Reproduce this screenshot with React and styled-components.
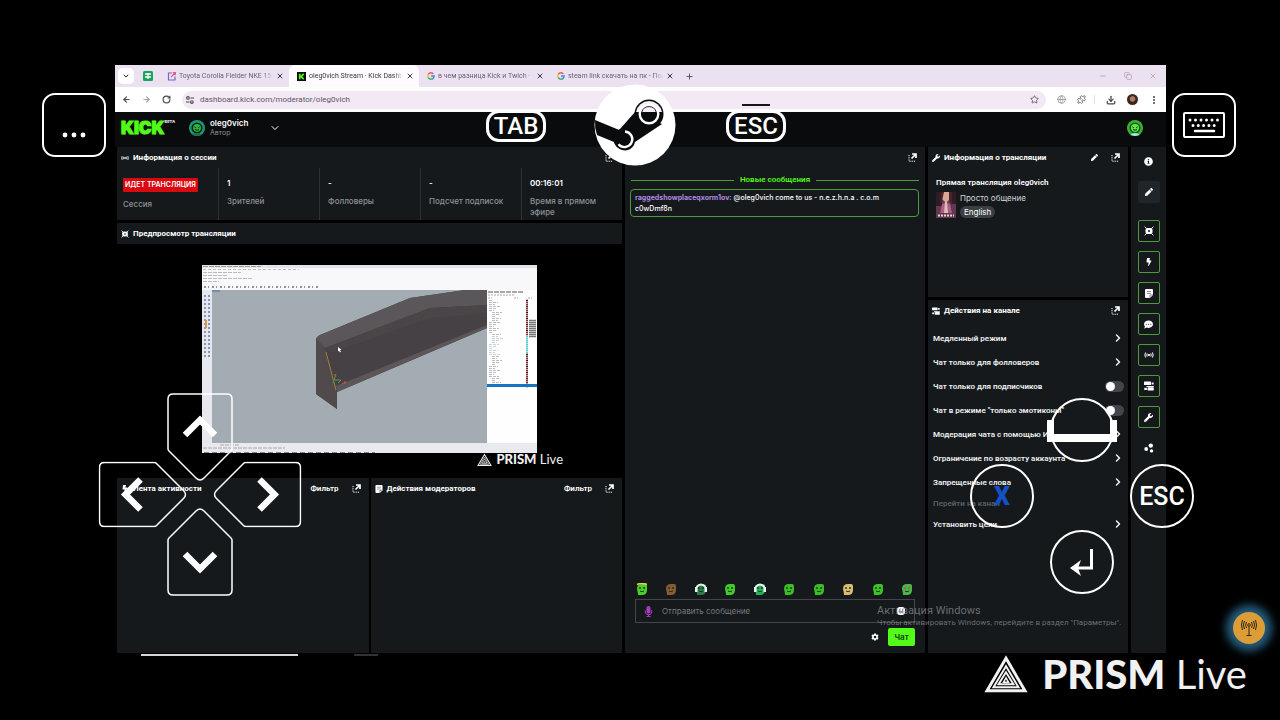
import React from "react";
import styled, { createGlobalStyle, css } from "styled-components";
import {
  ArrowLeft,
  ArrowRight,
  ChevronDown,
  ChevronRight,
  Copy,
  Download,
  EllipsisVertical,
  Globe,
  Minus,
  Plus,
  Puzzle,
  RotateCw,
  Star,
  X,
} from "lucide-react";
import {
  FaBolt,
  FaCommentDots,
  FaInfoCircle,
  FaMicrophone,
  FaPen,
  FaWrench,
} from "react-icons/fa";
import { IoSettingsSharp } from "react-icons/io5";

const GlobalStyle = createGlobalStyle`
  * {
    box-sizing: border-box;
  }
  body {
    margin: 0;
    background: #000;
    color: #fff;
    font-family: Inter, "Noto Sans", sans-serif;
    font-size: 8px;
  }
  button,
  input {
    margin: 0;
    padding: 0;
    border: 0;
    background: none;
    color: inherit;
    font: inherit;
  }
  svg {
    display: block;
    flex: none;
  }
`;

const colors = {
  panel: "#15191c",
  green: "#53fc18",
  outline: "#4f9a3c",
  muted: "#8d9296",
};

// Page
const Screen = styled.main`
  position: relative;
  display: flex;
  flex-direction: column;
  min-height: 100vh;
  padding: 65px 114px 64px 115px;
  overflow: hidden;
`;

const Desktop = styled.div`
  position: relative;
  flex: 1;
  display: flex;
  flex-direction: column;
  background: #000;
`;

// Browser chrome
const TabStrip = styled.div`
  display: flex;
  align-items: center;
  height: 22px;
  padding: 0 9px 0 3px;
  background: #ebe1f1;
  color: #6b6371;
  font-family: Roboto, sans-serif;
  font-size: 7px;
`;

const TabMenu = styled.button`
  display: grid;
  place-items: center;
  width: 16px;
  height: 16px;
  margin-right: 9px;
  border-radius: 5px;
  background: #fff;
  color: #222;
`;

const Tabs = styled.div`
  display: flex;
  margin: 0 6px;
`;

const Tab = styled.div`
  display: flex;
  align-items: center;
  gap: 3px;
  width: 130px;
  height: 22px;
  padding: 0 5px 0 8px;
  ${({ $active }) =>
    $active &&
    css`
      border-radius: 6px 6px 0 0;
      background: #fdfbfe;
      color: #3b363f;
    `}
`;

const TabTitle = styled.button`
  flex: 1;
  overflow: hidden;
  white-space: nowrap;
  text-align: left;
  mask-image: linear-gradient(to right, #000 90%, transparent);
`;

const IconButton = styled.button`
  display: grid;
  place-items: center;
  color: ${({ $color }) => $color || "inherit"};
`;

const WindowButtons = styled.div`
  display: flex;
  gap: 17px;
  margin-left: auto;
  color: #a795a8;
`;

const AddressBar = styled.div`
  display: flex;
  align-items: center;
  gap: 11px;
  height: 25px;
  padding: 0 7px;
  background: #fff;
  color: #4b4650;
`;

const Omnibox = styled.label`
  flex: 1;
  display: flex;
  align-items: center;
  gap: 6px;
  height: 18px;
  padding: 0 7px 0 4px;
  border-radius: 9px;
  background: #f2e9f5;

  input {
    flex: 1;
    outline: none;
    color: #5d5663;
    font-family: Roboto, sans-serif;
    font-size: 8px;
  }
`;

const Extensions = styled.div`
  display: flex;
  gap: 11px;
  padding-right: 8px;
  border-right: 1px solid #e6dcea;
`;

const UserPhoto = styled.span`
  width: 11px;
  height: 11px;
  border-radius: 50%;
  background: radial-gradient(circle at 50% 45%, #b07a62 28%, #3a2522 40%);
`;

// Dashboard
const Header = styled.header`
  display: flex;
  align-items: center;
  height: 35px;
  padding: 0 23px 4px 6px;
  background: #090b0c;
`;

const Logo = styled.a`
  display: flex;
  align-items: flex-start;
  width: 68px;
  color: ${colors.green};
  font-size: 17px;
  font-weight: 900;
  line-height: 20px;
  text-decoration: none;
  -webkit-text-stroke: 1px ${colors.green};

  sup {
    color: #ddd;
    font-size: 4px;
    line-height: 8px;
    -webkit-text-stroke: 0;
  }
`;

const Account = styled.button`
  display: flex;
  align-items: center;
  gap: 5px;
  margin-right: auto;
  text-align: left;
  line-height: 10px;

  strong,
  span {
    display: block;
  }
  strong {
    font-weight: 600;
  }
  span {
    color: ${colors.muted};
    font-size: 7px;
  }
  svg:last-child {
    margin-left: 16px;
  }
`;

const Layout = styled.div`
  flex: 1;
  display: grid;
  grid-template-columns: 505fr 300fr 200fr 35px;
  gap: 3px;
  padding: 0 0 0 2px;
`;

const Column = styled.div`
  display: flex;
  flex-direction: column;
  gap: 3px;
  min-width: 0;
`;

const Panel = styled.section`
  display: flex;
  flex-direction: column;
  min-width: 0;
  height: ${({ $height }) => $height || "auto"};
  flex: ${({ $grow }) => ($grow ? 1 : "none")};
  background: ${colors.panel};
`;

const PanelHead = styled.div`
  display: flex;
  align-items: center;
  gap: 13px;
  height: 21px;
  padding: 0 8px 0 4px;
`;

const PanelTitle = styled.h2`
  display: flex;
  align-items: center;
  gap: 4px;
  margin: 0 auto 0 0;
  font-family: Roboto, sans-serif;
  font-size: 8px;
  font-weight: 700;
  white-space: nowrap;

  svg {
    width: 8px;
    height: 8px;
  }
`;

const Filter = styled.button`
  font-family: Roboto, sans-serif;
  font-weight: 600;
`;

const Stats = styled.dl`
  flex: 1;
  display: grid;
  grid-template-columns: repeat(5, 1fr);
  margin: 0;
`;

const Stat = styled.div`
  display: flex;
  flex-direction: column;
  gap: 7px;
  padding: 10px 8px 0;
  line-height: 11px;
  font-weight: 500;

  & + & {
    border-left: 1px solid #2c3135;
  }
  &:first-child {
    padding-left: 6px;
  }
  dt {
    order: 2;
    color: ${colors.muted};
  }
  dd {
    margin: 0;
    font-weight: 600;
  }
`;

const LiveBadge = styled.span`
  display: inline-block;
  padding: 1px 2px;
  border-radius: 1px;
  background: #d8090f;
  font-size: 7px;
  font-weight: 600;
  line-height: 12px;
  white-space: nowrap;
`;

const Preview = styled.div`
  display: flex;
  justify-content: center;
  height: 231px;
  padding-top: 21px;
  background: #000;
`;

const VideoFrame = styled.div`
  width: 335px;
`;

const PrismMark = styled.div`
  display: flex;
  align-items: center;
  justify-content: flex-end;
  gap: ${({ $large }) => ($large ? "14px" : "4px")};
  color: #f1f1f1;
  font-family: Lato, sans-serif;
  font-size: ${({ $large }) => ($large ? "40px" : "13px")};
  line-height: 1;
  white-space: nowrap;

  b {
    font-weight: 900;
  }

  ${({ $large }) =>
    $large
      ? css`
          position: absolute;
          right: 33px;
          bottom: 26px;
        `
      : css`
          margin-right: -26px;
        `}
`;

const Pair = styled.div`
  flex: 1;
  display: grid;
  grid-template-columns: 1fr 1fr;
  gap: 2px;
`;

// Chat
const NewMessages = styled.div`
  display: flex;
  align-items: center;
  gap: 6px;
  margin: 7px 6px 4px;
  color: ${colors.green};
  font-family: Roboto, sans-serif;
  font-weight: 600;
  line-height: 10px;

  &::before,
  &::after {
    content: "";
    flex: 1;
    height: 1px;
    background: ${colors.outline};
  }
`;

const Message = styled.p`
  margin: 0 6px 0 5px;
  padding: 2px 4px;
  border: 1px solid ${colors.outline};
  border-radius: 4px;
  font-size: 7px;
  font-weight: 500;
  line-height: 11px;

  b {
    color: #b08be0;
    font-weight: 700;
  }
`;

const Emotes = styled.div`
  display: flex;
  justify-content: space-between;
  margin: auto 12px 4px 11px;
`;

const ChatForm = styled.form`
  display: flex;
  flex-direction: column;
  gap: 5px;
  padding: 0 10px 7px;
`;

const ChatField = styled.label`
  display: flex;
  align-items: center;
  gap: 8px;
  height: 24px;
  padding: 0 9px 0 7px;
  border: 1px solid #42464a;

  input {
    flex: 1;
    min-width: 0;
    outline: none;
    font-size: 8px;
  }
  input::placeholder {
    color: #74797e;
  }
`;

const ChatActions = styled.div`
  display: flex;
  justify-content: flex-end;
  align-items: center;
  gap: 9px;
`;

const SendButton = styled.button`
  width: 27px;
  height: 18px;
  border-radius: 2px;
  background: ${colors.green};
  color: #143808;
  font-weight: 600;
`;

// Stream info and channel actions
const StreamInfo = styled.div`
  padding: 9px 8px;
  font-family: Roboto, sans-serif;
  font-weight: 600;
  line-height: 12px;
`;

const Category = styled.div`
  display: flex;
  gap: 4px;
  margin-top: 3px;
  font-family: Inter, sans-serif;
  font-weight: 400;
  color: #d4d7d9;
`;

const Tag = styled.span`
  display: block;
  width: max-content;
  margin-top: 2px;
  padding: 0 4px;
  border-radius: 6px;
  background: #3b4044;
  color: #fff;
`;

const ActionList = styled.div`
  padding: 5px 4px 0 5px;
`;

const Action = styled.button`
  display: flex;
  align-items: center;
  justify-content: space-between;
  width: 100%;
  height: ${({ $muted }) => ($muted ? "18px" : "24px")};
  color: ${({ $muted }) => ($muted ? "#5a5f63" : "#f0f1f1")};
  font-family: Roboto, sans-serif;
  font-weight: 600;
  white-space: nowrap;
`;

const Switch = styled.input`
  appearance: none;
  display: flex;
  align-items: center;
  width: 19px;
  height: 11px;
  border-radius: 6px;
  background: #42464a;

  &::before {
    content: "";
    width: 9px;
    height: 9px;
    margin: 1px;
    border-radius: 50%;
    background: #fff;
  }
`;

const Rail = styled.nav`
  display: flex;
  flex-direction: column;
  align-items: center;
  gap: 9px;
  padding-top: 3px;
  background: ${colors.panel};
`;

const RailButton = styled.button`
  display: grid;
  place-items: center;
  width: 22px;
  height: 22px;
  border: 1px solid ${({ $on }) => ($on ? colors.outline : "transparent")};
  border-radius: 2px;
  background: ${({ $filled }) => ($filled ? "#20252a" : "none")};

  &:nth-child(3) {
    margin-top: 8px;
  }
`;

const Footer = styled.div`
  display: flex;
  gap: 56px;
  height: 3px;
  padding: 1px 0 0 26px;
  background: #000;

  span {
    width: 157px;
    background: #d5d5d5;
  }
  span + span {
    width: 24px;
    background: #333;
  }
`;

const Activation = styled.div`
  position: absolute;
  right: 40px;
  bottom: 28px;
  width: 249px;
  color: rgba(160, 164, 168, 0.62);
  font-family: Roboto, sans-serif;
  font-size: 8px;
  line-height: 10px;
  white-space: nowrap;

  b {
    display: block;
    font-size: 11px;
    font-weight: 400;
    line-height: 15px;
  }
`;

// Touch controls floating over the stream
const Control = styled.button`
  position: absolute;
  top: ${({ $top }) => $top}px;
  left: ${({ $left }) => $left};
  right: ${({ $right }) => $right};
`;

const SquareControl = styled(Control)`
  display: grid;
  place-items: center;
  width: 64px;
  height: 64px;
  border: 2px solid #fff;
  border-radius: 13px;
  background: #000;
`;

const PillControl = styled(Control)`
  width: 60px;
  height: 32px;
  border: 3px solid #fff;
  border-radius: 13px;
  background: #0a0b0c;
  font: 500 24px/26px Roboto, sans-serif;

  ${({ $handle }) =>
    $handle &&
    css`
      &::before {
        content: "";
        position: absolute;
        top: -9px;
        left: 13px;
        right: 13px;
        height: 2px;
        background: #161418;
      }
    `}
`;

const RoundControl = styled(Control)`
  display: grid;
  place-items: center;
  width: 64px;
  height: 64px;
  border: 2px solid #fff;
  border-radius: 50%;
  color: ${({ $color }) => $color || "#fff"};
  font: ${({ $bold }) => ($bold ? 900 : 500)} 25px Roboto, sans-serif;
`;

const BareControl = styled(Control)`
  display: block;
`;

const DPad = styled.div`
  position: absolute;
  top: 393px;
  left: 98px;
  display: grid;
  place-items: center;
  width: 203px;
  height: 203px;
`;

const DPadButton = styled.button`
  grid-area: 1 / 1;
  display: flex;
  align-items: flex-start;
  justify-content: center;
  height: 203px;
  transform: rotate(${({ $turn }) => $turn}deg);
  pointer-events: none;

  svg {
    pointer-events: auto;
  }
`;

const Beacon = styled(Control)`
  display: grid;
  place-items: center;
  width: 32px;
  height: 32px;
  border-radius: 50%;
  background: #dc9d38;
  color: #35260c;
  box-shadow: 0 0 8px 7px #255d7e;
`;

// Icons
const PopOut = () => (
  <svg width="9" height="9" viewBox="0 0 9 9" fill="none" stroke="#fff">
    <path d="M4 1h4v4M8 1L3.5 5.5" strokeWidth="1.7" />
    <path d="M1 2v6.2h7" strokeDasharray="1.2 1" />
  </svg>
);

const Signal = () => (
  <svg width="10" height="10" viewBox="0 0 10 10" fill="none" stroke="currentColor">
    <path d="M1.5 2.5q-1.2 2.5 0 5M3.2 3.4q-.8 1.6 0 3.2M8.5 2.5q1.2 2.5 0 5M6.8 3.4q.8 1.6 0 3.2" />
    <circle cx="5" cy="5" r=".7" fill="currentColor" />
  </svg>
);

const PreviewIcon = () => (
  <svg width="10" height="10" viewBox="0 0 10 10" fill="none" stroke="currentColor">
    <path d="M.7.7l1.8 1.8M9.3.7L7.5 2.5M9.3 9.3L7.5 7.5M.7 9.3l1.8-1.8" />
    <rect x="2" y="2.5" width="6" height="5" rx="1" fill="currentColor" />
    <circle cx="5" cy="5" r="1" fill={colors.panel} stroke="none" />
  </svg>
);

const Sliders = () => (
  <svg width="10" height="10" viewBox="0 0 10 10" fill="currentColor">
    <rect x="0" y=".5" width="7" height="3.6" rx=".6" />
    <path d="M7.6 1.4h2v2h-2zM2.5 5h7.3v1H2.5z" />
    <rect x="3.6" y="6.2" width="6.2" height="3.4" rx=".6" />
    <path d="M.3 6.8h2.6V9H.3z" />
  </svg>
);

const Note = () => (
  <svg width="8" height="9" viewBox="0 0 8 9">
    <path d="M1 0h6q1 0 1 1v5L5 9H1Q0 9 0 8V1q0-1 1-1z" fill="#fff" />
    <path d="M2 2.5h4M2 4.5h4M5 9V6h3" stroke={colors.panel} strokeWidth=".5" fill="none" />
  </svg>
);

const Dots = () => (
  <svg width="10" height="10" viewBox="0 0 10 10" fill="#fff">
    <circle cx="6.8" cy="2.6" r="2.2" />
    <circle cx="2.2" cy="6" r="1.9" />
    <circle cx="7.5" cy="7.9" r="1.7" />
  </svg>
);

const SiteSettings = () => (
  <svg width="8" height="8" viewBox="0 0 9 9" fill="none" stroke="currentColor" strokeWidth="1.2">
    <path d="M5 2.2h4M0 6.8h4" />
    <circle cx="2.2" cy="2.2" r="1.5" />
    <circle cx="6.6" cy="6.8" r="1.5" />
  </svg>
);

const Sheet = () => (
  <svg width="10" height="10" viewBox="0 0 10 10">
    <rect width="10" height="10" rx="1.5" fill="#16a45b" />
    <path d="M2 3h6M2 6h6M5 2v6" stroke="#fff" strokeWidth="1.3" />
  </svg>
);

const Draft = () => (
  <svg width="9" height="9" viewBox="0 0 9 9" fill="none" strokeWidth="1.2">
    <path d="M5 1H1.5v7H8V4.5" stroke="#7166cf" />
    <path d="M4 5L8.300.7M5.800.7h2.500v2.500" stroke="#e05b7c" />
  </svg>
);

const KickFavicon = () => (
  <svg width="9" height="9" viewBox="0 0 10 10">
    <rect width="10" height="10" fill="#0b0e0f" />
    <path d="M3 2v6M7.5 2l-3 3 3 3" fill="none" stroke={colors.green} strokeWidth="1.9" />
  </svg>
);

const Google = () => (
  <svg width="8" height="8" viewBox="0 0 8 8" fill="none" strokeWidth="1.4">
    <path d="M6.3 1.8a3.2 3.2 0 0 0-5 .6" stroke="#ea4335" />
    <path d="M1.3 2.4a3.2 3.2 0 0 0 0 3.2" stroke="#fbbc05" />
    <path d="M1.3 5.6a3.2 3.2 0 0 0 4.8.8" stroke="#34a853" />
    <path d="M6.1 6.4A3.2 3.2 0 0 0 7.2 4H4" stroke="#4285f4" />
  </svg>
);

const Avatar = ({ size, bright }) => (
  <svg width={size} height={size} viewBox="0 0 16 16">
    <circle cx="8" cy="8" r="8" fill={bright ? "#3bb42c" : "#1d9b74"} />
    <circle cx="8" cy="8" r="5.6" fill={bright ? "#175a2c" : "#0d1f1b"} />
    <path d="M4 8q0-4 4-4t4 4q0 3-4 4-4-1-4-4z" fill={bright ? "#5fe846" : "#2cb53c"} />
    <path d="M5.5 7l1.5 1M10.5 7L9 8M6 9.500q2 1.500 4 0" stroke="#0b2a14" fill="none" />
    <path d="M3 15q5-4 10 0l-5 1z" fill={bright ? "#9ceedd" : "#216a55"} />
  </svg>
);

const emotes = [
  { name: "angel", fill: "#4bcf2a", hat: "#e0d648" },
  { name: "box", fill: "#8b5a35" },
  { name: "dj", fill: "#2d7a4c", ears: true },
  { name: "smile", fill: "#42c92a" },
  { name: "spin", fill: "#26b05c", ears: true },
  { name: "grin", fill: "#3dbd25" },
  { name: "chill", fill: "#3dbd25" },
  { name: "gold", fill: "#ddb973" },
  { name: "think", fill: "#3fc128" },
  { name: "love", fill: "#4cb44c", eyes: "#d33c3c" },
];

const Emote = ({ fill, hat, ears, eyes = "#103a12" }) => (
  <svg width="12" height="12" viewBox="0 0 12 12">
    <path d="M1 6q0-5 5-5h3q2 0 2 2v4q0 5-5 5H2q0-2-1-6z" fill={fill} />
    {ears && <path d="M1.5 4q4.5-5 9 0" stroke="#e8f4f0" strokeWidth="2" fill="none" />}
    {ears && <path d="M0 4h2.500v5H0zM9.500 4H12v5H9.500z" fill="#e8f4f0" />}
    {hat && <path d="M1 1.500q5-2 10 0" stroke={hat} strokeWidth="1.500" fill="none" />}
    <circle cx="4" cy="5" r=".9" fill={eyes} />
    <circle cx="8" cy="5" r=".9" fill={eyes} />
    <path d="M4 8q2 1.500 4 0" stroke="#103a12" fill="none" />
  </svg>
);

const CategoryArt = () => (
  <svg width="20" height="26" viewBox="0 0 20 26">
    <rect width="20" height="26" fill="#63384f" />
    <path d="M0 0h6v14H0zM15 0h5v12h-5z" fill="#2c1d29" />
    <path d="M6 0h8l1 6-5 5-5-5z" fill="#d9a795" />
    <path d="M5 0h3L6 9 4 14zM13 0h3v13l-3-5z" fill="#4a2229" />
    <path d="M6 12q4-2 8 0l2 9H4z" fill="#a95f83" />
    <path d="M9 10h2l1 11H8z" fill="#e3b7bd" />
    <path d="M2 23.5h16" stroke="#e6d3dc" strokeWidth="2" strokeDasharray="2 1" />
  </svg>
);

const PrismIcon = ({ size }) => (
  <svg width={size} height={size * 0.9} viewBox="0 0 44 39" fill="none" stroke="currentColor">
    <path d="M22 4L3 36.5h38z" strokeWidth="3" />
    <path d="M22 12L9.5 33h25z" strokeWidth="2" />
    <path d="M22 18l-7.500 12h15z" strokeWidth="2" />
    <path d="M22 23.500L19.500 28h5z" strokeWidth="1.500" />
  </svg>
);

const layerRows = Array.from({ length: 44 }, (_, i) => i);

const ModelingVideo = () => (
  <svg width="335" height="188" viewBox="0 0 335 188">
    <rect width="335" height="188" fill="#f8f8fa" />
    <rect width="335" height="3" fill="#e3e3ea" />
    <path d="M1 1.500h58" stroke="#999" strokeDasharray="5 1" />
    <path d="M1 4.500h96" stroke="#bbb" strokeDasharray="3 2" />
    <path d="M1 7.500h38M1 10.500h24M1 13.500h49M1 16.500h16" stroke="#bbb" strokeDasharray="4 1" />
    <path d="M2 22h116" stroke="#8b93a0" strokeWidth="2" strokeDasharray="2 2 1 3" />
    <rect y="25" width="10" height="156" fill="#e7e8ee" />
    <path d="M3 30v62M7 30v62" stroke="#8593ba" strokeWidth="2" strokeDasharray="2 2" />
    <path d="M4 55v8" stroke="#d99a42" strokeWidth="2" />
    <rect x="10" y="25" width="275" height="153" fill="#a3acb2" />
    <path d="M10 26h8" stroke="#4c6db5" />
    <path d="M114 75q0-3 4-5l90-37 55-8h22v38l-150 64v17l-21-15z" fill="#464144" />
    <path d="M114 75q0-3 4-5l90-37 55-8h22v15l-57 3-105 40z" fill="#5b5659" />
    <path d="M123 83l105-40 57-3v8l-57 5-97 34z" fill="#4b4548" />
    <path d="M114 73l9 10 12 44v17l-21-15z" fill="#504a4d" />
    <path d="M135 127l150-64v-3l-151 61z" fill="#5c5659" />
    <path d="M124 87l10 38" stroke="#a57d37" />
    <path d="M131 118l3-9M132 115h7M136 118l3-3" stroke="#539653" />
    <path d="M132 109l2 3M143 116v3M140 119l4-2" stroke="#c05545" />
    <path d="M136 82v4.500l1-1 1 2 1-1-1-1.500h1.500z" fill="#fff" />
    <rect x="285" y="25" width="50" height="153" fill="#fefefe" />
    <path d="M286 27h36" stroke="#555" strokeDasharray="5 1" />
    <path d="M286 30h26M286 33h4M312 33h4M326 33h4" stroke="#aaa" strokeDasharray="2 1" />
    {layerRows.map((i) => (
      <g key={i} transform={`translate(0 ${35 + i * 2})`}>
        <path
          d={`M${287 + (i % 11 > 5 ? 3 : 0)} .5h${4 + ((i * 5) % 8)}`}
          stroke={i > 17 && i < 28 ? "#c5d5d8" : "#bbbbc0"}
          strokeDasharray="3 1"
        />
        <path
          d="M324 .5h2"
          strokeWidth="1.500"
          stroke={i > 17 && i < 27 ? "#54c6ce" : i % 3 ? "#8d2929" : "#2a2023"}
        />
        {i > 9 && i < 19 && <path d="M327 .5h7" stroke="#777" strokeWidth="1.500" />}
      </g>
    ))}
    <rect x="285" y="119" width="50" height="3" fill="#1774c4" />
    <rect y="178" width="335" height="10" fill="#e9e9f0" />
    <path d="M18 180h20M1 183h82" stroke="#aaa" strokeDasharray="4 1" />
    <path d="M2 187.500h171" stroke="#888" strokeDasharray="5 3" />
  </svg>
);

const SteamLogo = () => (
  <svg width="82" height="82" viewBox="0 0 82 82">
    <circle cx="41" cy="41" r="40.5" fill="#fff" />
    <path
      d="M1 36l23 9.500q1 .5 2-.5l15-17 27 12-27 18-1 3q-4 7-12 5-6-2-8-8L3 51Q.500 44 1 36z"
      fill="#0a0b0c"
    />
    <circle cx="55" cy="30" r="14.5" fill="#0a0b0c" />
    <circle cx="30" cy="55" r="10.5" fill="#0a0b0c" />
    <path d="M42 28a13.200 13.200 0 0 1 26 0z" fill="#f5eff8" />
    <circle cx="55" cy="30" r="9.300" fill="none" stroke="#fff" strokeWidth="2.400" />
    <path d="M47.800 28a7.500 7.500 0 0 1 14.400 0" fill="none" stroke="#2a282c" />
    <path d="M31 47.500a7.800 7.800 0 1 1-6.500 12.800" fill="none" stroke="#fff" strokeWidth="2.400" />
  </svg>
);

const KeyboardIcon = () => (
  <svg width="42" height="26" viewBox="0 0 42 26" fill="none" stroke="#fff" strokeWidth="2">
    <rect x="1" y="1" width="40" height="24" rx="1" />
    <path d="M7 8h30" strokeWidth="3" strokeLinecap="round" strokeDasharray="0 5.5" />
    <path d="M10 13.5h24" strokeWidth="3" strokeLinecap="round" strokeDasharray="0 5.3" />
    <path d="M12 19h19" strokeWidth="2.5" strokeLinecap="round" />
  </svg>
);

const MoreDots = () => (
  <svg width="26" height="28" viewBox="0 0 26 28" fill="#fff">
    <circle cx="4" cy="24" r="2.4" />
    <circle cx="13" cy="24" r="2.4" />
    <circle cx="22" cy="24" r="2.4" />
  </svg>
);

const EnterIcon = () => (
  <svg width="24" height="28" viewBox="0 0 24 28">
    <path d="M21.5 1v19H5" fill="none" stroke="#fff" strokeWidth="3" />
    <path d="M0 20l11-8-3 8 3 8z" fill="#fff" />
  </svg>
);

const SpaceIcon = () => (
  <svg width="72" height="64" viewBox="0 0 72 64">
    <circle cx="36" cy="32" r="31" fill="none" stroke="#fff" strokeWidth="2" />
    <path d="M1 22h7v14h56V22h7v22H1z" fill="#fff" />
  </svg>
);

const Arrow = () => (
  <svg width="66" height="88" viewBox="0 0 66 88" fill="none" stroke="#fff">
    <path
      d="M6 1h54q5 0 5 5v50q0 1-1 2L37 85q-4 4-8 0L2 58q-1-1-1-2V6q0-5 5-5z"
      strokeWidth="1.5"
    />
    <path d="M18 42l15-15 15 15" strokeWidth="6.5" />
  </svg>
);

const BeaconIcon = () => (
  <svg width="16" height="18" viewBox="0 0 16 18" fill="none" stroke="currentColor">
    <circle cx="8" cy="6" r="1.3" />
    <path d="M8 7.500V16M5.500 16.500h5M5.500 3q-1.800 3 0 6M3.500 2q-2.200 4 0 8M1.500 1q-2 5 0 10M10.500 3q1.800 3 0 6M12.500 2q2.200 4 0 8M14.500 1q2 5 0 10" />
  </svg>
);

// Data
const tabs = [
  { title: "Toyota Corolla Fielder NKE 15-", icon: <Draft /> },
  { title: "oleg0vich Stream · Kick Dashbo", icon: <KickFavicon />, active: true },
  { title: "в чем разница Kick и Twich - G", icon: <Google /> },
  { title: "steam link скачать на пк - Пои", icon: <Google /> },
];

const stats = [
  { value: "1", label: "Зрителей" },
  { value: "-", label: "Фолловеры" },
  { value: "-", label: "Подсчет подписок" },
  { value: "00:16:01", label: "Время в прямом эфире" },
];

const actions = [
  { label: "Медленный режим" },
  { label: "Чат только для фолловеров" },
  { label: "Чат только для подписчиков", toggle: true },
  { label: 'Чат в режиме "только эмотиконы"', toggle: true },
  { label: "Модерация чата с помощью ИИ" },
  { label: "Ограничение по возрасту аккаунта" },
  { label: "Запрещенные слова" },
  { label: "Перейти на канал", muted: true },
  { label: "Установить цели" },
];

const rail = [
  { label: "Информация", icon: <FaInfoCircle size={9} /> },
  { label: "Редактировать", icon: <FaPen size={8} />, filled: true },
  { label: "Предпросмотр", icon: <PreviewIcon />, on: true },
  { label: "Активность", icon: <FaBolt size={8} />, on: true },
  { label: "Модераторы", icon: <Note />, on: true },
  { label: "Чат", icon: <FaCommentDots size={9} />, on: true },
  { label: "Сессия", icon: <Signal />, on: true },
  { label: "Канал", icon: <Sliders />, on: true },
  { label: "Трансляция", icon: <FaWrench size={9} />, on: true },
  { label: "Ещё", icon: <Dots /> },
];

const PanelHeader = ({ icon, title, filter, edit }) => (
  <PanelHead>
    <PanelTitle>
      {icon}
      {title}
    </PanelTitle>
    {filter && <Filter type="button">Фильтр</Filter>}
    {edit && (
      <IconButton type="button" aria-label="Изменить">
        <FaPen size={7} />
      </IconButton>
    )}
    <IconButton type="button" aria-label="Открыть в окне">
      <PopOut />
    </IconButton>
  </PanelHead>
);

const Chrome = () => (
  <>
    <TabStrip>
      <TabMenu type="button" aria-label="Поиск вкладок">
        <ChevronDown size={8} strokeWidth={3} />
      </TabMenu>
      <Sheet />
      <Tabs>
        {tabs.map((tab) => (
          <Tab key={tab.title} $active={tab.active}>
            {tab.icon}
            <TabTitle type="button">{tab.title}</TabTitle>
            <IconButton type="button" aria-label="Закрыть" $color="#3b363f">
              <X size={8} strokeWidth={3} />
            </IconButton>
          </Tab>
        ))}
      </Tabs>
      <IconButton type="button" aria-label="Новая вкладка" $color="#3b363f">
        <Plus size={9} />
      </IconButton>
      <WindowButtons>
        <Minus size={8} />
        <Copy size={8} />
        <X size={8} />
      </WindowButtons>
    </TabStrip>
    <AddressBar>
      <IconButton type="button" aria-label="Назад">
        <ArrowLeft size={9} strokeWidth={3} />
      </IconButton>
      <IconButton type="button" aria-label="Вперёд" $color="#aaa3ae">
        <ArrowRight size={9} strokeWidth={3} />
      </IconButton>
      <IconButton type="button" aria-label="Обновить">
        <RotateCw size={9} strokeWidth={3} />
      </IconButton>
      <Omnibox>
        <SiteSettings />
        <input aria-label="Адрес" defaultValue="dashboard.kick.com/moderator/oleg0vich" />
        <Star size={9} />
      </Omnibox>
      <Extensions>
        <Globe size={9} color="#948c98" />
        <Puzzle size={9} />
      </Extensions>
      <Download size={10} strokeWidth={3} />
      <UserPhoto />
      <EllipsisVertical size={10} strokeWidth={3} />
    </AddressBar>
  </>
);

const Session = () => (
  <Panel $height="73px">
    <PanelHeader icon={<Signal />} title="Информация о сессии" />
    <Stats>
      <Stat>
        <dt>Сессия</dt>
        <dd>
          <LiveBadge>ИДЕТ ТРАНСЛЯЦИЯ</LiveBadge>
        </dd>
      </Stat>
      {stats.map((stat) => (
        <Stat key={stat.label}>
          <dt>{stat.label}</dt>
          <dd>{stat.value}</dd>
        </Stat>
      ))}
    </Stats>
  </Panel>
);

const Chat = () => (
  <Panel $grow>
    <PanelHeader />
    <NewMessages>Новые сообщения</NewMessages>
    <Message>
      <b>raggedshowplaceqxorm1ov:</b> @oleg0vich come to us - n.e.z.h.n.a . c.o.m
      <br />
      c0wDmf8n
    </Message>
    <Emotes>
      {emotes.map((emote) => (
        <IconButton key={emote.name} type="button" aria-label={emote.name}>
          <Emote {...emote} />
        </IconButton>
      ))}
    </Emotes>
    <ChatForm>
      <ChatField>
        <FaMicrophone size={11} color="#a63bc4" />
        <input aria-label="Сообщение" placeholder="Отправить сообщение" />
        <svg width="8" height="8" viewBox="0 0 8 8">
          <rect width="8" height="8" rx="3" fill="#fff" />
          <path d="M2 3h1M5 3h1M2 5h4" stroke="#222" />
        </svg>
      </ChatField>
      <ChatActions>
        <IconButton type="button" aria-label="Настройки чата">
          <IoSettingsSharp size={8} />
        </IconButton>
        <SendButton type="button">Чат</SendButton>
      </ChatActions>
    </ChatForm>
  </Panel>
);

const ChannelActions = () => (
  <Panel $grow>
    <PanelHeader icon={<Sliders />} title="Действия на канале" />
    <ActionList>
      {actions.map(({ label, toggle, muted }) =>
        toggle ? (
          <Action as="label" key={label}>
            {label}
            <Switch type="checkbox" role="switch" />
          </Action>
        ) : (
          <Action key={label} type="button" $muted={muted}>
            {label}
            {!muted && <ChevronRight size={12} strokeWidth={3} />}
          </Action>
        )
      )}
    </ActionList>
  </Panel>
);

const Controls = () => (
  <>
    <SquareControl type="button" aria-label="Меню" $top={93} $left="42px">
      <MoreDots />
    </SquareControl>
    <PillControl type="button" $top={110} $left="calc(50% - 154px)">
      TAB
    </PillControl>
    <BareControl type="button" aria-label="Steam" $top={84} $left="calc(50% - 46px)">
      <SteamLogo />
    </BareControl>
    <PillControl type="button" $top={110} $left="calc(50% + 86px)" $handle>
      ESC
    </PillControl>
    <SquareControl type="button" aria-label="Клавиатура" $top={93} $right="44px">
      <KeyboardIcon />
    </SquareControl>
    <DPad>
      {["Вверх", "Вправо", "Вниз", "Влево"].map((label, i) => (
        <DPadButton key={label} type="button" aria-label={label} $turn={i * 90}>
          <Arrow />
        </DPadButton>
      ))}
    </DPad>
    <BareControl type="button" aria-label="Пробел" $top={398} $right="162px">
      <SpaceIcon />
    </BareControl>
    <RoundControl type="button" $top={464} $right="246px" $color="#1450c8" $bold>
      X
    </RoundControl>
    <RoundControl type="button" $top={464} $right="86px">
      ESC
    </RoundControl>
    <RoundControl type="button" aria-label="Ввод" $top={530} $right="166px">
      <EnterIcon />
    </RoundControl>
    <Beacon type="button" aria-label="Эфир" $top={612} $right="15px">
      <BeaconIcon />
    </Beacon>
  </>
);

const Prism = ({ large }) => (
  <PrismMark $large={large}>
    <PrismIcon size={large ? 44 : 15} />
    <span>
      <b>PRISM</b> Live
    </span>
  </PrismMark>
);

const App = () => (
  <>
    <GlobalStyle />
    <Screen>
      <Desktop>
        <Chrome />
        <Header>
          <Logo href="#">
            KICK<sup>BETA</sup>
          </Logo>
          <Account type="button">
            <Avatar size={16} />
            <div>
              <strong>oleg0vich</strong>
              <span>Автор</span>
            </div>
            <ChevronDown size={12} />
          </Account>
          <Avatar size={16} bright />
        </Header>
        <Layout>
          <Column>
            <Session />
            <Panel>
              <PanelHead>
                <PanelTitle>
                  <PreviewIcon />
                  Предпросмотр трансляции
                </PanelTitle>
              </PanelHead>
              <Preview>
                <VideoFrame>
                  <ModelingVideo />
                  <Prism />
                </VideoFrame>
              </Preview>
            </Panel>
            <Pair>
              <Panel $grow>
                <PanelHeader icon={<FaBolt />} title="Лента активности" filter />
              </Panel>
              <Panel $grow>
                <PanelHeader icon={<Note />} title="Действия модераторов" filter />
              </Panel>
            </Pair>
          </Column>
          <Column>
            <Chat />
          </Column>
          <Column>
            <Panel $height="150px">
              <PanelHeader icon={<FaWrench />} title="Информация о трансляции" edit />
              <StreamInfo>
                Прямая трансляция oleg0vich
                <Category>
                  <CategoryArt />
                  <div>
                    Просто общение
                    <Tag>English</Tag>
                  </div>
                </Category>
              </StreamInfo>
            </Panel>
            <ChannelActions />
          </Column>
          <Rail>
            {rail.map(({ label, icon, on, filled }) => (
              <RailButton key={label} type="button" aria-label={label} $on={on} $filled={filled}>
                {icon}
              </RailButton>
            ))}
          </Rail>
        </Layout>
        <Footer>
          <span />
          <span />
        </Footer>
        <Activation>
          <b>Активация Windows</b>
          Чтобы активировать Windows, перейдите в раздел "Параметры".
        </Activation>
      </Desktop>
      <Controls />
      <Prism large />
    </Screen>
  </>
);

export default App;
